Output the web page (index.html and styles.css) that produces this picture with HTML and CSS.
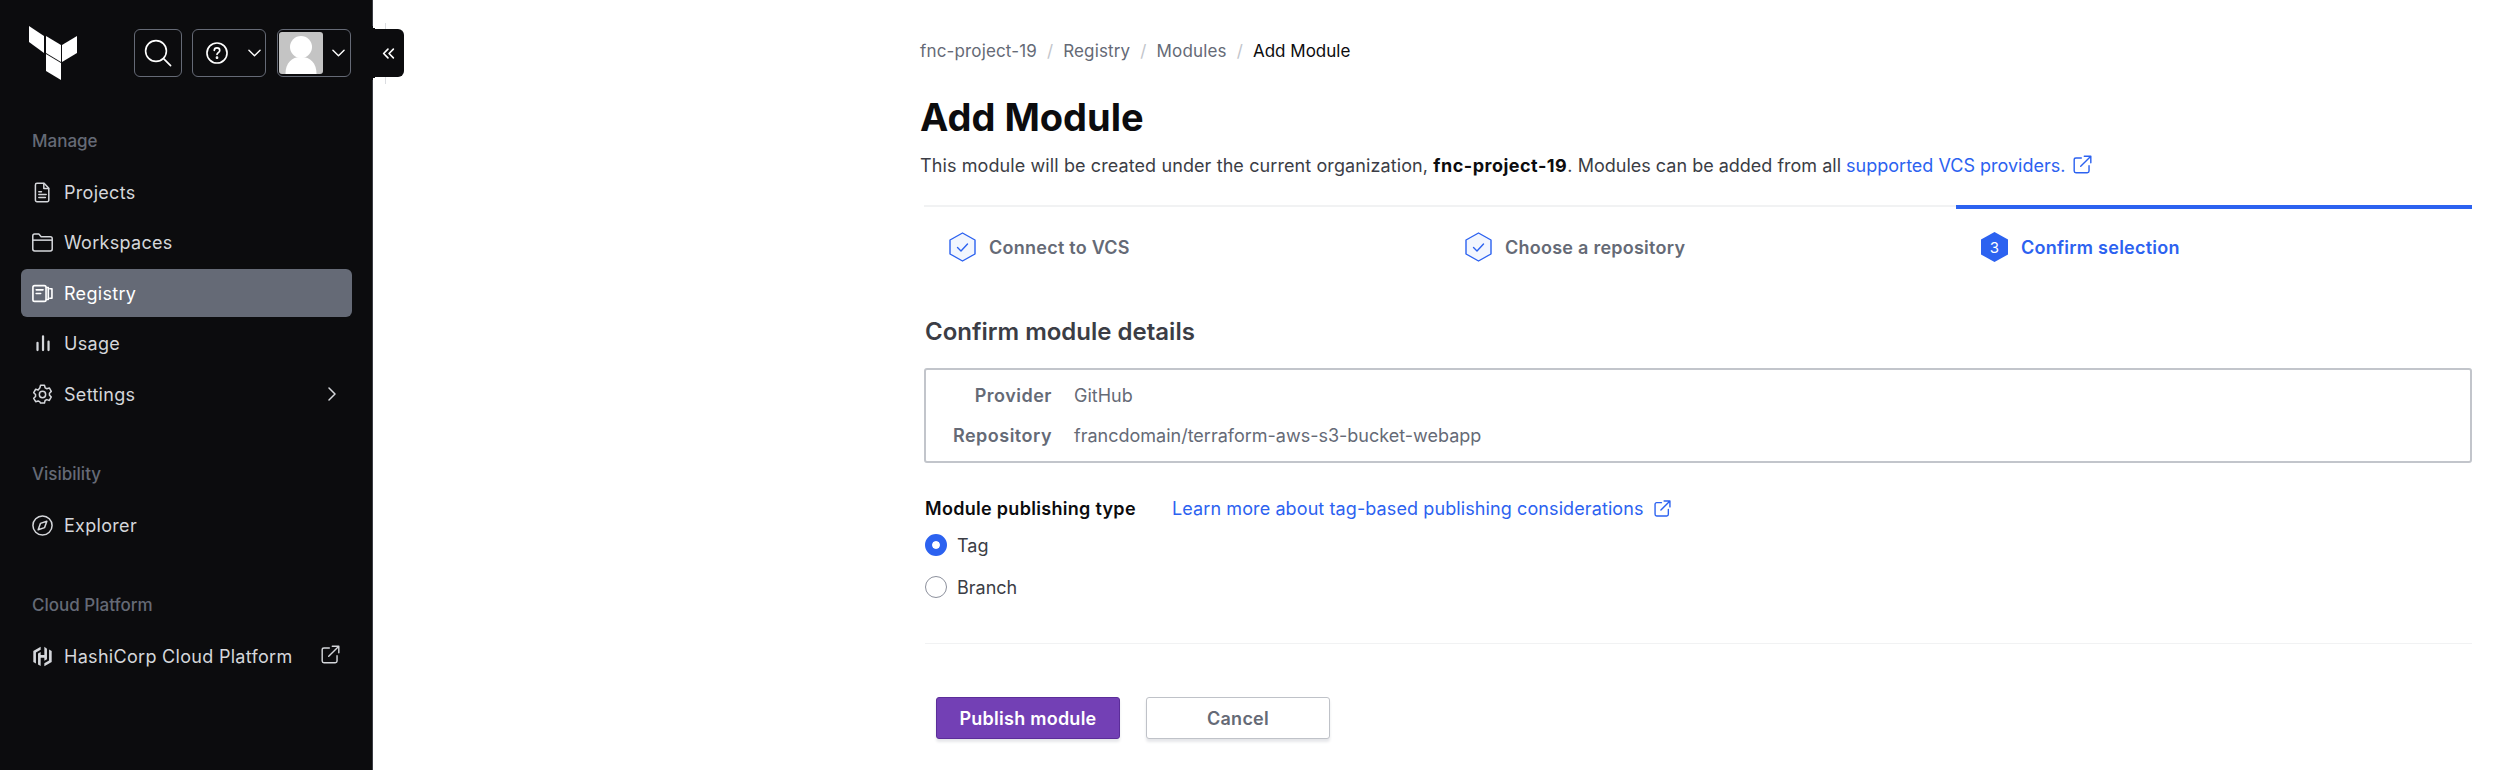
FILE: index.html
```html
<!DOCTYPE html>
<html lang="en">

<head>
    <meta charset="UTF-8">
    <meta name="viewport" content="width=device-width, initial-scale=1.0">
    <title>Add Module</title>
    <link rel="stylesheet" href="styles.css">
</head>

<body>

    <aside class="sidebar">
        <div class="side-header">
            <svg class="logo" viewBox="0 0 48 54" fill="#fff">
                <polygon points="0,0 15,10 15,27 0,16"/>
                <polygon points="17,10 32,19 32,36 17,27"/>
                <polygon points="33,19 48,10 48,27 33,36"/>
                <polygon points="17,28 32,37 32,54 17,45"/>
            </svg>
            <button class="head-btn btn-search">
                <svg class="icon-search" viewBox="0 0 28 28" fill="none" stroke="#fff" stroke-width="1.6" stroke-linecap="round">
                    <circle cx="12" cy="12" r="10.4"/>
                    <path d="M19.6 19.6l7 7"/>
                </svg>
            </button>
            <button class="head-btn btn-help">
                <svg class="icon-help" viewBox="0 0 16 16" fill="none" stroke="#fff" stroke-width="1.2" stroke-linecap="round">
                    <circle cx="8" cy="8" r="7.3"/>
                    <path d="M6 6.2c0-1.2 1-1.9 2-1.9s2 .7 2 1.8c0 1.6-2 1.6-2 3"/>
                    <circle cx="8" cy="11.4" r=".4" fill="#fff"/>
                </svg>
                <svg class="icon-chev" viewBox="0 0 14 8" fill="none" stroke="#fff" stroke-width="1.5" stroke-linecap="round" stroke-linejoin="round">
                    <path d="M1 1l6 6 6-6"/>
                </svg>
            </button>
            <button class="head-btn btn-user">
                <span class="avatar">
                    <svg viewBox="0 0 43 42" fill="#fff">
                        <circle cx="21.500" cy="15" r="11"/>
                        <path d="M6 42c0-11 6-17 15.500-17S37 31 37 42z"/>
                    </svg>
                </span>
                <svg class="icon-chev" viewBox="0 0 14 8" fill="none" stroke="#fff" stroke-width="1.5" stroke-linecap="round" stroke-linejoin="round">
                    <path d="M1 1l6 6 6-6"/>
                </svg>
            </button>
        </div>

        <h2 class="side-title side-title-first">Manage</h2>
        <nav class="side-list">
            <a class="side-item">
                <svg class="side-icon" viewBox="0 0 16 16" fill="none" stroke="currentColor" stroke-width="1.15" stroke-linejoin="round" stroke-linecap="round">
                    <path d="M3.800 1h5.400l3.600 3.800v9a1.200 1.200 0 0 1-1.200 1.200H3.800a1.200 1.200 0 0 1-1.200-1.200V2.200A1.200 1.200 0 0 1 3.800 1z"/>
                    <path d="M9 1.200v3.800h3.600M5.200 7.400h2M5.200 9.600h5.600M5.200 11.900h5"/>
                </svg>
                <span>Projects</span>
            </a>
            <a class="side-item">
                <svg class="side-icon" viewBox="0 0 16 16" fill="none" stroke="currentColor" stroke-width="1.15" stroke-linejoin="round">
                    <path d="M.6 3c0-.8.6-1.400 1.400-1.400h3.200l1.800 2h7c.8 0 1.400.6 1.400 1.400v8c0 .8-.6 1.400-1.400 1.400H2c-.8 0-1.400-.6-1.400-1.400z"/>
                    <path d="M.6 6.200h14.800"/>
                </svg>
                <span>Workspaces</span>
            </a>
            <a class="side-item side-item-active">
                <svg class="side-icon" viewBox="0 0 16 16" fill="none" stroke="currentColor" stroke-width="1.25" stroke-linejoin="round" stroke-linecap="round">
                    <rect x=".7" y="2" width="10" height="12" rx="1.300"/>
                    <path d="M3.200 5.200h5.200M3.200 8h3.400M11 3.400h1.400v9.200H11M13.600 4.400h1.600v7.200h-1.600"/>
                </svg>
                <span>Registry</span>
            </a>
            <a class="side-item">
                <svg class="side-icon" viewBox="0 0 16 16" fill="none" stroke="currentColor" stroke-width="1.7" stroke-linecap="round">
                    <path d="M4.200 7.500v5.500M8.400 2.500v10.500M12.600 6.500v6.500"/>
                </svg>
                <span>Usage</span>
            </a>
            <a class="side-item">
                <svg class="side-icon" viewBox="0 0 16 16" fill="none" stroke="currentColor" stroke-width="1.15" stroke-linejoin="round">
                    <circle cx="8" cy="8" r="2.400"/>
                    <path d="M6.500 1h3l.5 1.900 1.300.7 1.900-.6 1.500 2.600-1.400 1.400v1.500l1.400 1.400-1.500 2.600-1.900-.6-1.300.7-.5 1.900h-3L6 13.600l-1.300-.7-1.900.6-1.500-2.600L2.700 9.500V8L1.300 6.600l1.500-2.600 1.900.6L6 2.900z"/>
                </svg>
                <span>Settings</span>
                <svg class="side-end side-chev" viewBox="0 0 8 14" fill="none" stroke="currentColor" stroke-width="1.5" stroke-linecap="round" stroke-linejoin="round">
                    <path d="M1 1l6 6-6 6"/>
                </svg>
            </a>
        </nav>

        <h2 class="side-title">Visibility</h2>
        <nav class="side-list">
            <a class="side-item">
                <svg class="side-icon" viewBox="0 0 16 16" fill="none" stroke="currentColor" stroke-width="1.15" stroke-linejoin="round">
                    <circle cx="8" cy="8" r="7.300"/>
                    <path d="M11.300 4.700l-1.700 4.900-4.900 1.700 1.700-4.900z"/>
                </svg>
                <span>Explorer</span>
            </a>
        </nav>

        <h2 class="side-title">Cloud Platform</h2>
        <nav class="side-list">
            <a class="side-item">
                <svg class="side-icon" viewBox="0 0 16 16" fill="currentColor">
                    <path d="M6.600.6L1 3.800v8.300l2 1.200V4.900l3.600-2.100zM9.400.6v6.300H6.600V4.600l-2 1.200v8.300l2 1.200V8.900h2.800v2.400l2-1.200V2zM13 2.700v8.400l-3.600 2.100v2.200l5.600-3.200V3.900z"/>
                </svg>
                <span>HashiCorp Cloud Platform</span>
                <svg class="side-end side-ext" viewBox="0 0 16 16" fill="none" stroke="currentColor" stroke-width="1.200" stroke-linecap="round" stroke-linejoin="round">
                    <path d="M7 2.500H2.500A1.500 1.500 0 0 0 1 4v9.500A1.500 1.500 0 0 0 2.500 15H12a1.500 1.500 0 0 0 1.500-1.500V9M6.500 9.500L15 1M9.500 1H15v5.500"/>
                </svg>
            </a>
        </nav>

        <span class="collapse-line"></span>
        <button class="collapse-tab">
            <svg viewBox="0 0 12 10" fill="none" stroke="#fff" stroke-width="1.500" stroke-linecap="round" stroke-linejoin="round">
                <path d="M5.500 1L1.500 5l4 4M10.500 1l-4 4 4 4"/>
            </svg>
        </button>
    </aside>

    <main class="content">
        <div class="crumbs">
            <span>fnc-project-19</span><i>/</i>
            <span>Registry</span><i>/</i>
            <span>Modules</span><i>/</i>
            <span class="crumb-now">Add Module</span>
        </div>

        <h1>Add Module</h1>
        <p class="lead">This module will be created under the current organization, <strong>fnc-project-19</strong>. <span class="lead-rest">Modules can be added from all </span><a class="link">supported VCS providers.</a><svg class="ext-icon" viewBox="0 0 16 16" fill="none" stroke="currentColor" stroke-width="1.200" stroke-linecap="round" stroke-linejoin="round"><path d="M7 2.500H2.500A1.500 1.500 0 0 0 1 4v9.500A1.500 1.500 0 0 0 2.500 15H12a1.500 1.500 0 0 0 1.500-1.500V9M6.500 9.500L15 1M9.500 1H15v5.500"/></svg></p>

        <div class="steps">
            <div class="step">
                <svg class="hex" viewBox="0 0 27 30">
                    <path d="M13.500 1L26 8v14l-12.500 7L1 22V8z" fill="#f2f6fe" stroke="#2c62f0" stroke-width="1.400" stroke-linejoin="round"/>
                    <path d="M8.500 15.500l3.500 3.500 6.500-7" fill="none" stroke="#2c62f0" stroke-width="1.400" stroke-linecap="round" stroke-linejoin="round"/>
                </svg>
                <span>Connect to VCS</span>
            </div>
            <div class="step">
                <svg class="hex" viewBox="0 0 27 30">
                    <path d="M13.500 1L26 8v14l-12.500 7L1 22V8z" fill="#f2f6fe" stroke="#2c62f0" stroke-width="1.400" stroke-linejoin="round"/>
                    <path d="M8.500 15.500l3.500 3.500 6.500-7" fill="none" stroke="#2c62f0" stroke-width="1.400" stroke-linecap="round" stroke-linejoin="round"/>
                </svg>
                <span>Choose a repository</span>
            </div>
            <div class="step step-active">
                <span class="hex-num">
                    <svg class="hex" viewBox="0 0 27 30">
                        <path d="M13.500 0L27 7.500v15L13.500 30 0 22.500v-15z" fill="#2c62f0"/>
                    </svg>
                    <b>3</b>
                </span>
                <span>Confirm selection</span>
            </div>
        </div>

        <section class="details">
            <h3>Confirm module details</h3>
            <dl class="detail-box">
                <dt>Provider</dt>
                <dd>GitHub</dd>
                <dt>Repository</dt>
                <dd>francdomain/terraform-aws-s3-bucket-webapp</dd>
            </dl>

            <div class="type-row">
                <span class="type-label">Module publishing type</span>
                <a class="link">Learn more about tag-based publishing considerations</a>
                <svg class="ext-icon ext-small" viewBox="0 0 16 16" fill="none" stroke="currentColor" stroke-width="1.300" stroke-linecap="round" stroke-linejoin="round">
                    <path d="M7 2.500H2.500A1.500 1.500 0 0 0 1 4v9.500A1.500 1.500 0 0 0 2.500 15H12a1.500 1.500 0 0 0 1.500-1.500V9M6.500 9.500L15 1M9.500 1H15v5.500"/>
                </svg>
            </div>

            <label class="radio-row"><span class="radio radio-on"></span>Tag</label>
            <label class="radio-row"><span class="radio"></span>Branch</label>

            <hr class="rule">

            <div class="actions">
                <button class="btn btn-primary">Publish module</button>
                <button class="btn btn-plain">Cancel</button>
            </div>
        </section>
    </main>

</body>

</html>
```

FILE: styles.css
```css
* {
    box-sizing: border-box;
}

body {
    margin: 0;
    height: 770px;
    overflow: hidden;
    display: flex;
    background-color: #fff;
    color: #0c0c0e;
    font-family: Inter, "Liberation Sans", sans-serif;
}

button {
    font-family: inherit;
    cursor: pointer;
}

/* sidebar */
.sidebar {
    position: relative;
    flex: 0 0 373px;
    height: 770px;
    padding: 26px 20px 0 21px;
    background-color: #0c0c0e;
    border-right: 1px solid #3b3d45;
    color: #d5d7db;
}

.side-header {
    display: flex;
    align-items: flex-start;
    height: 54px;
    padding-left: 8px;
}

.logo {
    width: 48px;
    height: 54px;
    margin-right: 57px;
}

.head-btn {
    display: flex;
    align-items: center;
    height: 48px;
    margin-top: 3px;
    padding: 0;
    background: none;
    border: 1px solid #656a76;
    border-radius: 6px;
}

.btn-search {
    justify-content: center;
    width: 48px;
    margin-right: 10px;
}

.icon-search {
    width: 28px;
    height: 28px;
}

.btn-help {
    width: 74px;
    margin-right: 11px;
    padding-left: 13px;
}

.icon-help {
    width: 22px;
    height: 22px;
    margin-right: 20px;
}

.icon-chev {
    width: 13px;
    height: 8px;
}

.btn-user {
    width: 74px;
    padding-left: 1px;
}

.avatar {
    display: block;
    width: 44px;
    height: 42px;
    margin-right: 9px;
    background-color: #c4c4c4;
    border-radius: 3px;
    overflow: hidden;
}

.avatar svg {
    display: block;
    width: 44px;
    height: 42px;
}

.side-title {
    margin: 44px 0 15px 11px;
    font-size: 17px;
    line-height: 24px;
    font-weight: 500;
    color: #656a76;
}

.side-title-first {
    margin-top: 49px;
}

.side-list {
    display: flex;
    flex-direction: column;
    gap: 2.6px;
}

.side-item {
    display: flex;
    align-items: center;
    height: 48px;
    padding: 0 12px 0 11px;
    border-radius: 6px;
    font-size: 18px;
    letter-spacing: .3px;
}

.side-item-active {
    background-color: #656a76;
    color: #fff;
}

.side-icon {
    flex: none;
    width: 21px;
    height: 21px;
    margin-right: 11px;
}

.side-end {
    margin-left: auto;
}

.side-chev {
    width: 8px;
    height: 14px;
    margin-right: 4px;
}

.side-ext {
    width: 19px;
    height: 19px;
    margin-top: -4px;
    margin-right: 0;
}

/* tab sticking out of the sidebar */
.collapse-line {
    position: absolute;
    top: 23px;
    left: 385px;
    width: 1px;
    height: 61px;
    background-color: #dbdde1;
}

.collapse-tab {
    position: absolute;
    top: 29px;
    left: 372px;
    display: flex;
    align-items: center;
    justify-content: center;
    width: 32px;
    height: 48px;
    padding: 0;
    background-color: #0c0c0e;
    border: none;
    border-radius: 0 6px 6px 0;
}

.collapse-tab svg {
    width: 13px;
    height: 11px;
}

.collapse-tab::before,
.collapse-tab::after {
    content: "";
    position: absolute;
    left: 0;
    width: 5px;
    height: 5px;
}

.collapse-tab::before {
    top: -5px;
    background: radial-gradient(circle at 100% 0, transparent 5px, #0c0c0e 5px);
}

.collapse-tab::after {
    bottom: -5px;
    background: radial-gradient(circle at 100% 100%, transparent 5px, #0c0c0e 5px);
}

/* main column */
.content {
    flex: none;
    width: 1552px;
    margin-left: 547px;
    padding-top: 39px;
}

.crumbs {
    display: flex;
    align-items: center;
    height: 24px;
    font-size: 17px;
    letter-spacing: .15px;
    color: #656a76;
}

.crumbs i {
    margin: 0 10px;
    font-style: normal;
    color: #c2c5cb;
}

.crumb-now {
    color: #0c0c0e;
    letter-spacing: 0;
}

h1 {
    margin: 30px 0 0;
    font-size: 38px;
    line-height: 48px;
    font-weight: 700;
}

.lead {
    margin: 12px 0 0;
    font-size: 18px;
    line-height: 26px;
    letter-spacing: .1px;
    color: #3b3d45;
    white-space: nowrap;
}

.lead strong {
    color: #0c0c0e;
    font-weight: 700;
    letter-spacing: .5px;
}

.lead-rest,
.lead .link {
    letter-spacing: 0;
}

.link {
    color: #2c62f0;
}

.ext-icon {
    width: 19px;
    height: 19px;
    margin-left: 8px;
    vertical-align: -2px;
    color: #2c62f0;
}

.steps {
    display: grid;
    grid-template-columns: repeat(3, 1fr);
    margin: 26px 0 0 4px;
}

.step {
    display: flex;
    align-items: center;
    gap: 13px;
    height: 84px;
    padding: 0 0 2px 25px;
    border-top: 2px solid #f1f2f3;
    font-size: 18px;
    font-weight: 600;
    letter-spacing: .25px;
    color: #656a76;
}

.step-active {
    border-top: 4px solid #2c62f0;
    padding-bottom: 4px;
    color: #2c62f0;
}

.hex {
    display: block;
    flex: none;
    width: 27px;
    height: 30px;
}

.hex-num {
    position: relative;
    display: block;
}

.hex-num b {
    position: absolute;
    inset: 0;
    display: flex;
    align-items: center;
    justify-content: center;
    font-size: 15px;
    font-weight: 400;
    color: #fff;
}

.details {
    margin-left: 5px;
    padding-top: 29px;
}

h3 {
    margin: 0;
    font-size: 24px;
    line-height: 28px;
    font-weight: 600;
    color: #3b3d45;
}

.detail-box {
    display: grid;
    grid-template-columns: 126px 1fr;
    gap: 0 22px;
    align-content: center;
    height: 95px;
    margin: 22px 0 0 -1px;
    border: 2px solid #c2c5cb;
    border-radius: 3px;
    font-size: 18px;
    line-height: 40px;
}

.detail-box dt {
    text-align: right;
    font-weight: 600;
    letter-spacing: .5px;
    color: #656a76;
}

.detail-box dd {
    margin: 0;
    color: #656a76;
}

.type-row {
    display: flex;
    align-items: center;
    height: 26px;
    margin-top: 32px;
    font-size: 18px;
    letter-spacing: .1px;
}

.type-label {
    width: 247px;
    font-weight: 600;
    letter-spacing: .3px;
    color: #0c0c0e;
}

.ext-small {
    width: 17px;
    height: 17px;
    margin-left: 10px;
}

.radio-row {
    display: flex;
    align-items: center;
    gap: 10px;
    height: 22px;
    margin-top: 13px;
    font-size: 18px;
    color: #3b3d45;
}

.radio-row + .radio-row {
    margin-top: 20px;
}

.radio {
    flex: none;
    width: 22px;
    height: 22px;
    background-color: #fff;
    border: 1px solid #8c909c;
    border-radius: 50%;
}

.radio-on {
    background-color: #2c62f0;
    border: 7px solid #2c62f0;
    box-shadow: inset 0 0 0 4px #fff;
}

.rule {
    height: 1px;
    margin: 45px 0 0;
    background-color: #f1f2f3;
    border: none;
}

.actions {
    display: flex;
    gap: 26px;
    margin: 53px 0 0 11px;
}

.btn {
    width: 184px;
    height: 42px;
    padding: 0;
    border-radius: 3px;
    font-size: 18px;
    font-weight: 600;
    letter-spacing: .25px;
    box-shadow: 0 3px 3px #e6e7ea;
}

.btn-primary {
    background-color: #7340b5;
    border: 1px solid #5b2d99;
    color: #fff;
}

.btn-plain {
    background-color: #fff;
    border: 1px solid #bfc2c8;
    color: #656a76;
}
```
